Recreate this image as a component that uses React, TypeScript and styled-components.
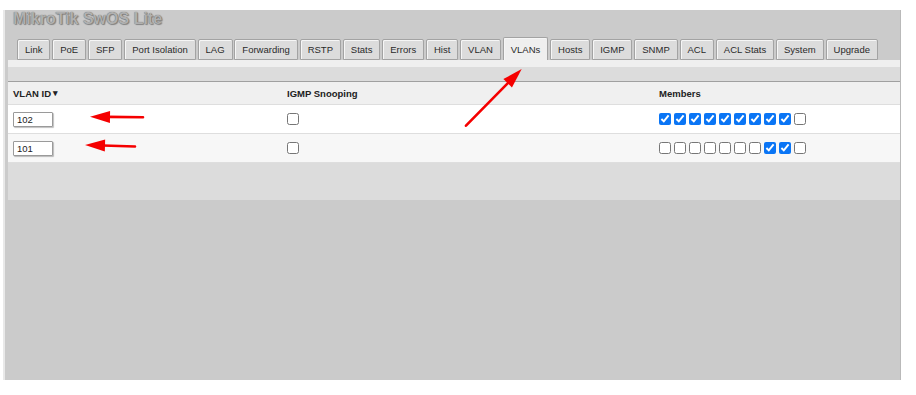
import * as React from 'react';
import styled, { createGlobalStyle } from 'styled-components';

const GlobalStyle = createGlobalStyle`
  html, body {
    margin: 0;
    padding: 0;
    background: #ffffff;
  }

  body {
    font-family: "Liberation Sans", Arial, sans-serif;
    color: #222;
  }
`;

const Page = styled.div`
  position: relative;
  width: 916px;
  height: 395px;
  padding: 10px 0 0 3px;
  box-sizing: border-box;
`;

const Frame = styled.div`
  width: 898px;
  height: 370px;
  box-sizing: border-box;
  background: #cbcbcb;
  border-left: 2px solid #e9e9e9;
  border-right: 1px solid #b9b9b9;
  padding-left: 3px;
  display: flex;
  flex-direction: column;
`;

const Title = styled.h1`
  margin: 0 0 0 5px;
  font-size: 16px;
  line-height: 18px;
  font-weight: bold;
  color: #b0b0b0;
  text-shadow: 0 0 1px #555, 1px 1px 1px #888;
`;

const TabBar = styled.nav`
  display: flex;
  align-items: flex-end;
  gap: 1.8px;
  padding: 9px 0 0 9px;
`;

const Tab = styled.div<{ $active?: boolean }>`
  box-sizing: border-box;
  height: ${p => (p.$active ? '23px' : '21px')};
  padding: 0 7px;
  display: flex;
  align-items: center;
  padding-bottom: ${p => (p.$active ? '0' : '1px')};
  font-size: 9.5px;
  color: #2a2a2a;
  background: ${p => (p.$active ? '#efefef' : '#dcdcdc')};
  border: 1px solid #a3a3a3;
  border-bottom: ${p => (p.$active ? 'none' : '1px solid #a3a3a3')};
  border-radius: 2px 2px 0 0;
  box-shadow: inset 1px 1px 0 #f6f6f6;
`;

const Content = styled.div`
  display: flex;
  flex-direction: column;
`;

const Strip = styled.div`
  height: 7px;
  background: #efefef;
`;

const ToolArea = styled.div`
  height: 14px;
  background: #dcdcdc;
  border-bottom: 1px solid #a0a0a0;
`;

const Grid = styled.div<{ $bg: string }>`
  display: grid;
  grid-template-columns: 274px 372px 1fr;
  align-items: center;
  background: ${p => p.$bg};
  border-bottom: 1px solid #dedede;
`;

const HeadCell = styled.div`
  height: 22px;
  padding-left: 5px;
  display: flex;
  align-items: center;
  font-size: 9.5px;
  font-weight: bold;
  color: #222;
`;

const Cell = styled.div`
  height: 28px;
  padding-left: 5px;
  display: flex;
  align-items: center;
`;

const SortMark = styled.span`
  font-size: 9px;
  margin-left: 2px;
`;

const IdInput = styled.input`
  box-sizing: border-box;
  width: 40px;
  height: 15px;
  margin: 0;
  padding: 0 3px;
  font-family: "Liberation Sans", Arial, sans-serif;
  font-size: 9.5px;
  color: #222;
  background: #fff;
  border: 1px solid #9a9a9a;
  border-radius: 1px;
  box-shadow: 1px 1px 1px rgba(0, 0, 0, 0.25);
`;

const Check = styled.input`
  width: 12px;
  height: 12px;
  margin: 0 3px 0 0;
  accent-color: #0a75f5;
`;

const Footer = styled.div`
  height: 37px;
  background: #dcdcdc;
`;

const Overlay = styled.svg`
  position: absolute;
  left: 0;
  top: 0;
  pointer-events: none;
`;

const tabs = [
  'Link', 'PoE', 'SFP', 'Port Isolation', 'LAG', 'Forwarding', 'RSTP', 'Stats',
  'Errors', 'Hist', 'VLAN', 'VLANs', 'Hosts', 'IGMP', 'SNMP', 'ACL', 'ACL Stats',
  'System', 'Upgrade',
];

const vlans = [
  { id: '102', igmp: false, members: [1, 1, 1, 1, 1, 1, 1, 1, 1, 0], bg: '#ffffff' },
  { id: '101', igmp: false, members: [0, 0, 0, 0, 0, 0, 0, 1, 1, 0], bg: '#f7f7f7' },
];

type Pt = [number, number];

const Arrow = ({ tip, tail }: { tip: Pt, tail: Pt }) => {
  const dx = tail[0] - tip[0];
  const dy = tail[1] - tip[1];
  const len = Math.sqrt(dx * dx + dy * dy);
  const ux = dx / len;
  const uy = dy / len;
  const bx = tip[0] + ux * 20;
  const by = tip[1] + uy * 20;
  const w = 6;
  const head = `${tip[0]},${tip[1]} ${bx - uy * w},${by + ux * w} ${bx + uy * w},${by - ux * w}`;
  return (
    <g>
      <line x1={bx - ux * 2} y1={by - uy * 2} x2={tail[0]} y2={tail[1]} stroke="#f50000" strokeWidth={2.6} strokeLinecap="round" />
      <polygon points={head} fill="#f50000" />
    </g>
  );
};

export default function App() {
  return (
    <>
      <GlobalStyle />
      <Page>
        <Frame>
          <Title>MikroTik SwOS Lite</Title>
          <TabBar>
            {tabs.map(t => <Tab key={t} $active={t === 'VLANs'}>{t}</Tab>)}
          </TabBar>
          <Content>
            <Strip />
            <ToolArea />
            <Grid $bg="#f0f0f0">
              <HeadCell>VLAN ID<SortMark>▾</SortMark></HeadCell>
              <HeadCell>IGMP Snooping</HeadCell>
              <HeadCell>Members</HeadCell>
            </Grid>
            {vlans.map(v => (
              <Grid key={v.id} $bg={v.bg}>
                <Cell><IdInput defaultValue={v.id} /></Cell>
                <Cell><Check type="checkbox" defaultChecked={v.igmp} /></Cell>
                <Cell>
                  {v.members.map((m, i) => <Check key={i} type="checkbox" defaultChecked={!!m} />)}
                </Cell>
              </Grid>
            ))}
            <Footer />
          </Content>
        </Frame>
        <Overlay width={916} height={395}>
          <Arrow tip={[90, 116.7]} tail={[143, 117.3]} />
          <Arrow tip={[85, 145]} tail={[135, 146.5]} />
          <Arrow tip={[521.7, 69]} tail={[466, 125.7]} />
        </Overlay>
      </Page>
    </>
  );
}
